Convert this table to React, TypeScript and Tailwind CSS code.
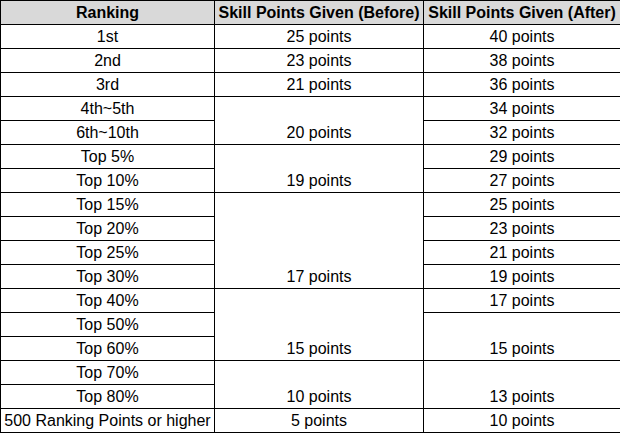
import React from 'react'

type Row = {
  rank: string
  before?: { text: string; span: number }
  after?: { text: string; span: number }
}

const rows: Row[] = [
  { rank: '1st', before: { text: '25 points', span: 1 }, after: { text: '40 points', span: 1 } },
  { rank: '2nd', before: { text: '23 points', span: 1 }, after: { text: '38 points', span: 1 } },
  { rank: '3rd', before: { text: '21 points', span: 1 }, after: { text: '36 points', span: 1 } },
  { rank: '4th~5th', before: { text: '20 points', span: 2 }, after: { text: '34 points', span: 1 } },
  { rank: '6th~10th', after: { text: '32 points', span: 1 } },
  { rank: 'Top 5%', before: { text: '19 points', span: 2 }, after: { text: '29 points', span: 1 } },
  { rank: 'Top 10%', after: { text: '27 points', span: 1 } },
  { rank: 'Top 15%', before: { text: '17 points', span: 4 }, after: { text: '25 points', span: 1 } },
  { rank: 'Top 20%', after: { text: '23 points', span: 1 } },
  { rank: 'Top 25%', after: { text: '21 points', span: 1 } },
  { rank: 'Top 30%', after: { text: '19 points', span: 1 } },
  { rank: 'Top 40%', before: { text: '15 points', span: 3 }, after: { text: '17 points', span: 1 } },
  { rank: 'Top 50%', after: { text: '15 points', span: 2 } },
  { rank: 'Top 60%' },
  { rank: 'Top 70%', before: { text: '10 points', span: 2 }, after: { text: '13 points', span: 2 } },
  { rank: 'Top 80%' },
  { rank: '500 Ranking Points or higher', before: { text: '5 points', span: 1 }, after: { text: '10 points', span: 1 } },
]

const cell = 'border border-black text-center align-bottom p-0 pb-[2px] leading-[18px]'

export default function App() {
  return (
    <div className="w-[620px] h-[433px] bg-white font-['Liberation_Sans',Arial,sans-serif] text-[16px] text-black">
      <table className="w-[620px] table-fixed border-collapse">
        <colgroup>
          <col className="w-[214px]" />
          <col className="w-[209px]" />
          <col className="w-[197px]" />
        </colgroup>
        <thead>
          <tr className="h-[24px] bg-[#d9d9d9] font-bold">
            <th className={cell}>Ranking</th>
            <th className={cell}>Skill Points Given (Before)</th>
            <th className={cell}>Skill Points Given (After)</th>
          </tr>
        </thead>
        <tbody>
          {rows.map((r) => (
            <tr key={r.rank} className="h-[24px]">
              <td className={cell + ' whitespace-nowrap'}>{r.rank}</td>
              {r.before && (
                <td className={cell} rowSpan={r.before.span}>
                  {r.before.text}
                </td>
              )}
              {r.after && (
                <td className={cell} rowSpan={r.after.span}>
                  {r.after.text}
                </td>
              )}
            </tr>
          ))}
        </tbody>
      </table>
    </div>
  )
}
